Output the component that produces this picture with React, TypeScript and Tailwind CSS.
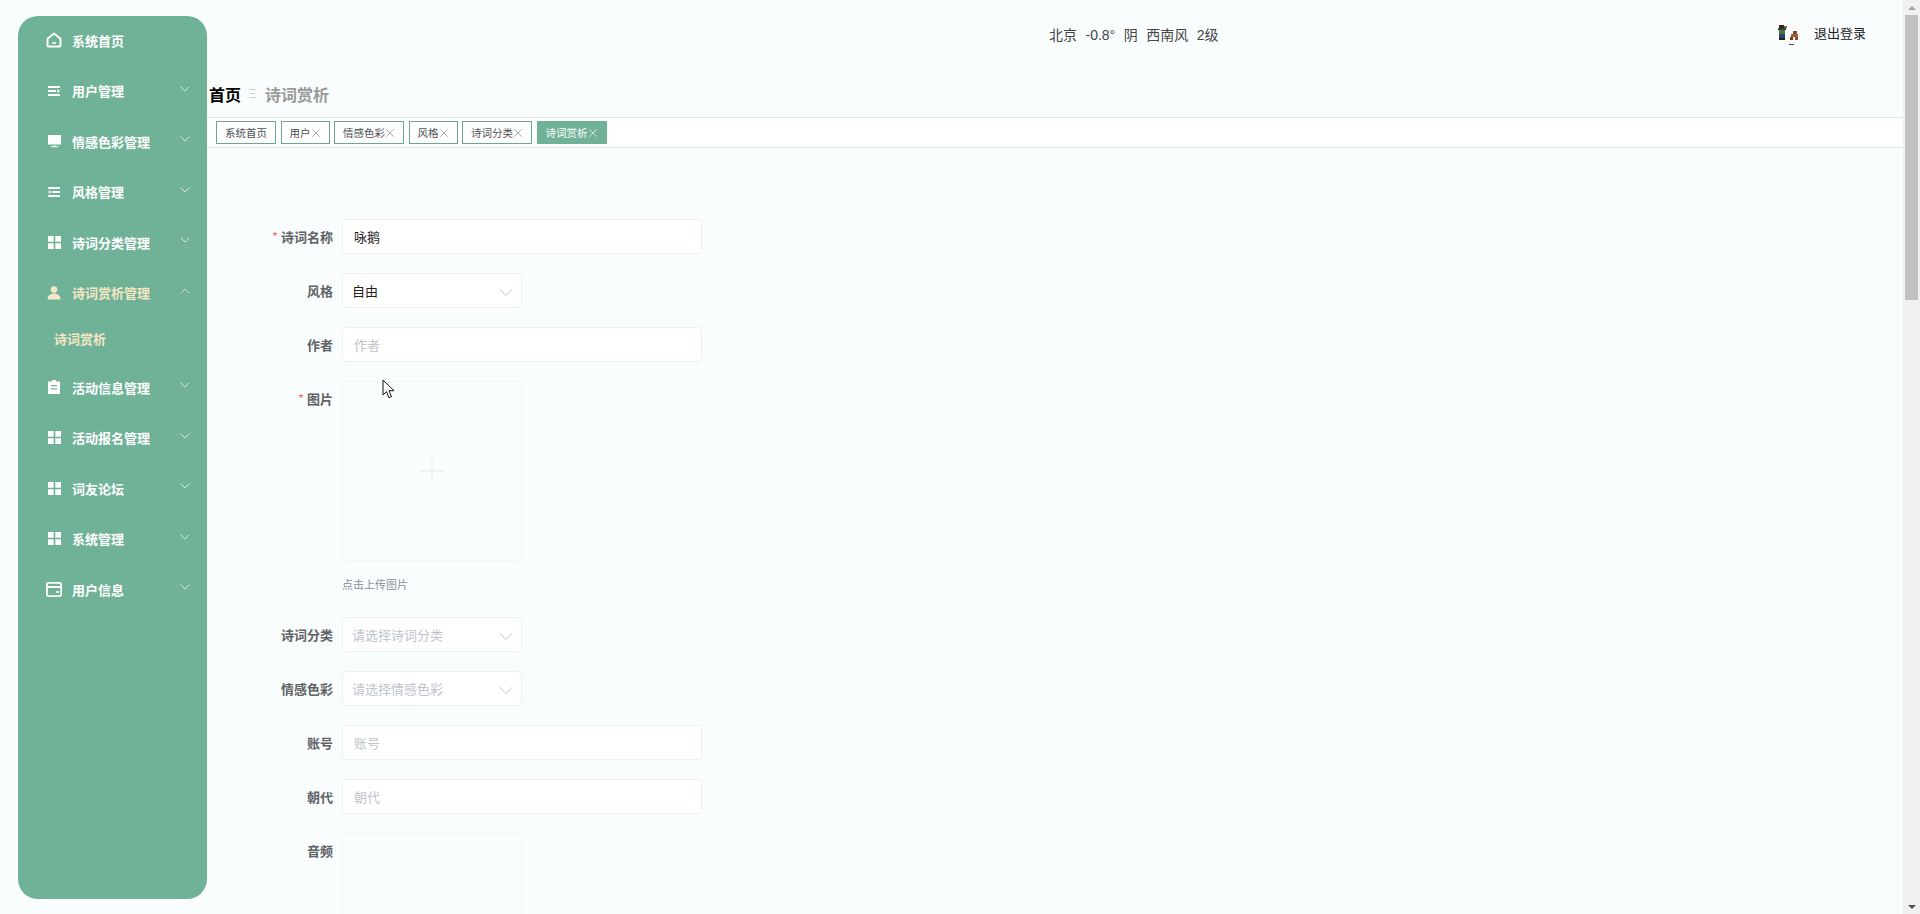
import { ChevronDown, ChevronUp, X } from "lucide-react"
import type { ReactNode } from "react"

const font = "font-['Noto_Sans_CJK_SC','Microsoft_YaHei',sans-serif]"

function HomeIcon() {
  return (
    <svg viewBox="0 0 16 16" className="w-4 h-4" fill="none" stroke="currentColor" strokeWidth="2">
      <path d="M8 1.500 1.500 6.800V13.600a1 1 0 0 0 1 1h11a1 1 0 0 0 1-1V6.800Z" strokeLinejoin="round" />
      <path d="M6 11h4" strokeWidth="1.500" />
    </svg>
  )
}

function LinesIcon({ flip }: { flip?: boolean }) {
  return (
    <svg viewBox="0 0 12 10" className="w-3 h-[10px]" fill="currentColor">
      {flip ? (
        <path d="M0 0h12v2H0ZM4 4h8v2H4ZM0 8h12v2H0ZM2.600 3 0 5l2.600 2Z" />
      ) : (
        <path d="M0 0h12v2H0ZM0 4h8v2H0ZM0 8h12v2H0ZM9.400 3 12 5 9.400 7Z" />
      )}
    </svg>
  )
}

function ScreenIcon() {
  return (
    <svg viewBox="0 0 13 13" className="w-[13px] h-[13px]" fill="currentColor">
      <path d="M0 0h13v9.500H0ZM5.500 10.500h2v.8h2.500v1H3v-1h2.500Z" />
    </svg>
  )
}

function GridIcon() {
  return (
    <svg viewBox="0 0 13 13" className="w-[13px] h-[13px]" fill="currentColor">
      <path d="M0 0h5.700v5.700H0ZM7.300 0H13v5.700H7.300ZM0 7.300h5.700V13H0ZM7.300 7.300H13V13H7.300Z" />
    </svg>
  )
}

function PersonIcon() {
  return (
    <svg viewBox="0 0 14 14" className="w-[14px] h-[14px]" fill="currentColor">
      <circle cx="7" cy="3.600" r="3.300" />
      <path d="M0.500 13.500c0-3.800 2.500-6 6.500-6s6.500 2.200 6.500 6Z" />
    </svg>
  )
}

function ClipboardIcon() {
  return (
    <svg viewBox="0 0 12 14" className="w-3 h-[14px]" fill="currentColor">
      <path fillRule="evenodd" d="M4 0h4v1.500h4V14H0V1.500h4ZM3 5v1.200h6V5Zm0 3.200v1.200h6V8.200Z" />
    </svg>
  )
}

function WalletIcon() {
  return (
    <svg viewBox="0 0 16 15" className="w-4 h-[15px]" fill="none" stroke="currentColor" strokeWidth="1.800">
      <rect x="0.900" y="0.900" width="14.200" height="13.200" rx="1.500" />
      <path d="M1 5h14M10 9.800h3" />
    </svg>
  )
}

function Avatar() {
  return (
    <svg viewBox="0 0 24 24" className="w-6 h-6" shapeRendering="crispEdges">
      <rect width="24" height="24" fill="#fbfdfd" />
      <rect x="3" y="4" width="5" height="3" fill="#2c2a1c" />
      <rect x="8" y="5" width="3" height="2" fill="#6f6a48" />
      <rect x="2" y="7" width="8" height="2" fill="#3c3a26" />
      <rect x="3" y="9" width="6" height="4" fill="#3f7a3a" />
      <rect x="3" y="13" width="6" height="4" fill="#24456e" />
      <rect x="3" y="17" width="6" height="2" fill="#26241e" />
      <rect x="17" y="10" width="4" height="3" fill="#7b4a30" />
      <rect x="15" y="13" width="7" height="3" fill="#a0603c" />
      <rect x="14" y="16" width="3" height="3" fill="#6e4128" />
      <rect x="19" y="16" width="3" height="3" fill="#8c5234" />
      <rect x="13" y="23" width="5" height="1" fill="#4a4a4a" />
    </svg>
  )
}

function Cursor() {
  return (
    <svg viewBox="0 0 14 20" className="absolute left-[382px] top-[379px] w-[14px] h-[20px]">
      <path d="M1 1v15l3.500-3.300 2.500 6 2.500-1-2.500-6h5Z" fill="#fff" stroke="#111" strokeWidth="1" />
    </svg>
  )
}

type MenuItem = { label: string; icon: ReactNode; open?: boolean }

const menu: MenuItem[] = [
  { label: "系统首页", icon: <HomeIcon /> },
  { label: "用户管理", icon: <LinesIcon /> },
  { label: "情感色彩管理", icon: <ScreenIcon /> },
  { label: "风格管理", icon: <LinesIcon flip /> },
  { label: "诗词分类管理", icon: <GridIcon /> },
  { label: "诗词赏析管理", icon: <PersonIcon />, open: true },
  { label: "活动信息管理", icon: <ClipboardIcon /> },
  { label: "活动报名管理", icon: <GridIcon /> },
  { label: "词友论坛", icon: <GridIcon /> },
  { label: "系统管理", icon: <GridIcon /> },
  { label: "用户信息", icon: <WalletIcon /> },
]

function Sidebar() {
  return (
    <aside className="w-[189px] h-[883px] ml-[18px] mt-4 shrink-0 rounded-[20px] bg-[#6fb298]">
      <div className="-mt-[1px]">
        {menu.map((item, i) => (
          <div key={item.label}>
            <div className={`h-[50.5px] flex items-center pl-[28px] pr-[14px] text-[13px] font-bold ${item.open ? "text-[#f5e6c4]" : "text-white"}`}>
              <span className="w-4 flex justify-center">{item.icon}</span>
              <span className="ml-[10px] flex-1 leading-none">{item.label}</span>
              {i > 0 &&
                (item.open ? (
                  <ChevronUp className="w-4 h-4 text-[#f5e6c4] -translate-y-[2px]" strokeWidth={1.200} />
                ) : (
                  <ChevronDown className="w-4 h-4 text-white/90 -translate-y-[2px]" strokeWidth={1.200} />
                ))}
            </div>
            {item.open && (
              <div className="h-[45px] -mt-[1px] pb-[1px] pl-[36px] flex items-center text-[13px] font-bold text-[#f5e6c4]">诗词赏析</div>
            )}
          </div>
        ))}
      </div>
    </aside>
  )
}

const tabs = ["系统首页", "用户", "情感色彩", "风格", "诗词分类", "诗词赏析"]

function Tabs() {
  return (
    <div className="h-[31px] bg-white border-y border-[#dfe6e6] pl-[9px] flex items-start pt-[3px] gap-[4.500px]">
      {tabs.map((t, i) => {
        const active = i === tabs.length - 1
        return (
          <div
            key={t}
            className={`h-[23px] px-[8px] flex items-center text-[10.500px] border ${active ? "bg-[#6fb298] border-[#6fb298] text-white" : "bg-white border-[#6fa593] text-[#4d4f52]"}`}
          >
            {t}
            {i > 0 && <X className={`w-[14px] h-[14px] -mx-[2px] shrink-0 ${active ? "text-white" : "text-[#808080]"}`} strokeWidth={1.100} />}
          </div>
        )
      })}
    </div>
  )
}

function Row({ label, required, children }: { label: string; required?: boolean; children: ReactNode }) {
  return (
    <div className="flex mb-[19px]">
      <label className="w-[135px] h-[35px] pr-[9px] flex items-center justify-end text-[13px] font-bold text-[#606266] shrink-0">
        {required && <span className="text-[#f56c6c] mr-[3px] font-normal">*</span>}
        {label}
      </label>
      {children}
    </div>
  )
}

function TextInput({ placeholder, value }: { placeholder: string; value?: string }) {
  return (
    <input
      readOnly
      placeholder={placeholder}
      defaultValue={value}
      className="w-[360px] h-[35px] px-[11px] bg-white border border-[#eef1f3] rounded-[3px] text-[13px] text-[#1f2022] outline-none placeholder:text-[#c0c4cc]"
    />
  )
}

function Select({ value, placeholder }: { value?: string; placeholder?: string }) {
  return (
    <div className="w-[180px] h-[35px] pl-[9px] pr-[3px] flex items-center justify-between bg-white border border-[#eef1f3] rounded-[3px] text-[13px]">
      <span className={value ? "text-[#1f2022]" : "text-[#c0c4cc]"}>{value ?? placeholder}</span>
      <ChevronDown className="w-6 h-6 text-[#dcdfe3] translate-y-[1.500px]" strokeWidth={1.300} />
    </div>
  )
}

function UploadBox({ plus = true }: { plus?: boolean }) {
  return (
    <div className="w-[180px] h-[180px] shrink-0 flex items-center justify-center border border-[#f3f6f7] rounded-[4px] bg-[#fafdfe]">
      {plus && (
        <svg viewBox="0 0 24 24" className="w-6 h-6" stroke="#edf0f2" strokeWidth="1.500">
          <path d="M12 0v24M0 12h24" />
        </svg>
      )}
    </div>
  )
}

export default function App() {
  return (
    <div className={`relative flex h-[914px] w-[1920px] overflow-hidden bg-[#f9fdfe] ${font}`}>
      <Sidebar />
      <main className="flex-1 min-w-0 h-full overflow-hidden">
        <header className="h-[69px] relative flex items-start">
          <div className="pl-[842px] pt-[25px] flex gap-[8.500px] text-[14px] leading-5 text-[#444] font-['Liberation_Sans','Noto_Sans_CJK_SC',sans-serif]">
            <span>北京</span>
            <span>-0.8°</span>
            <span>阴</span>
            <span>西南风</span>
            <span>2级</span>
          </div>
          <div className="absolute top-[21px] right-[37px] flex items-center gap-[14px] text-[13px] text-[#222]">
            <Avatar />
            退出登录
          </div>
        </header>
        <div className="h-[48px] pt-[3px] pb-[2px] flex items-center text-[16px] font-bold">
          <span className="text-black ml-[2px]">首页</span>
          <svg viewBox="0 0 8 9" className="w-2 h-[9px] mx-2" fill="#cfcfcf">
            <path d="M0 0h7v1H0ZM1 4h5v1H1ZM0 8h7v1H0Z" />
          </svg>
          <span className="text-[#999]">诗词赏析</span>
        </div>
        <Tabs />
        <form className="pt-[71px]">
          <Row label="诗词名称" required>
            <TextInput placeholder="诗词名称" value="咏鹅" />
          </Row>
          <Row label="风格">
            <Select value="自由" />
          </Row>
          <Row label="作者">
            <TextInput placeholder="作者" />
          </Row>
          <Row label="图片" required>
            <div>
              <UploadBox />
              <div className="mt-[13px] h-[20px] text-[11px] leading-5 text-[#8a8f96]">点击上传图片</div>
            </div>
          </Row>
          <div className="h-[4px]" />
          <Row label="诗词分类">
            <Select placeholder="请选择诗词分类" />
          </Row>
          <Row label="情感色彩">
            <Select placeholder="请选择情感色彩" />
          </Row>
          <Row label="账号">
            <TextInput placeholder="账号" />
          </Row>
          <Row label="朝代">
            <TextInput placeholder="朝代" />
          </Row>
          <Row label="音频">
            <UploadBox plus={false} />
          </Row>
        </form>
      </main>
      <div className="relative w-[17px] h-full shrink-0 bg-[#f1f1f1] flex flex-col items-center justify-between">
        <div className="h-[15px] w-full flex items-center justify-center">
          <div className="w-0 h-0 border-x-[4px] border-x-transparent border-b-[4px] border-b-[#a3a3a3]" />
        </div>
        <div className="absolute top-[15px] left-[2px] w-[13px] h-[285px] bg-[#c1c1c1]" />
        <div className="h-[15px] w-full flex items-center justify-center">
          <div className="w-0 h-0 border-x-[4px] border-x-transparent border-t-[4px] border-t-[#505050]" />
        </div>
      </div>
      <Cursor />
    </div>
  )
}
